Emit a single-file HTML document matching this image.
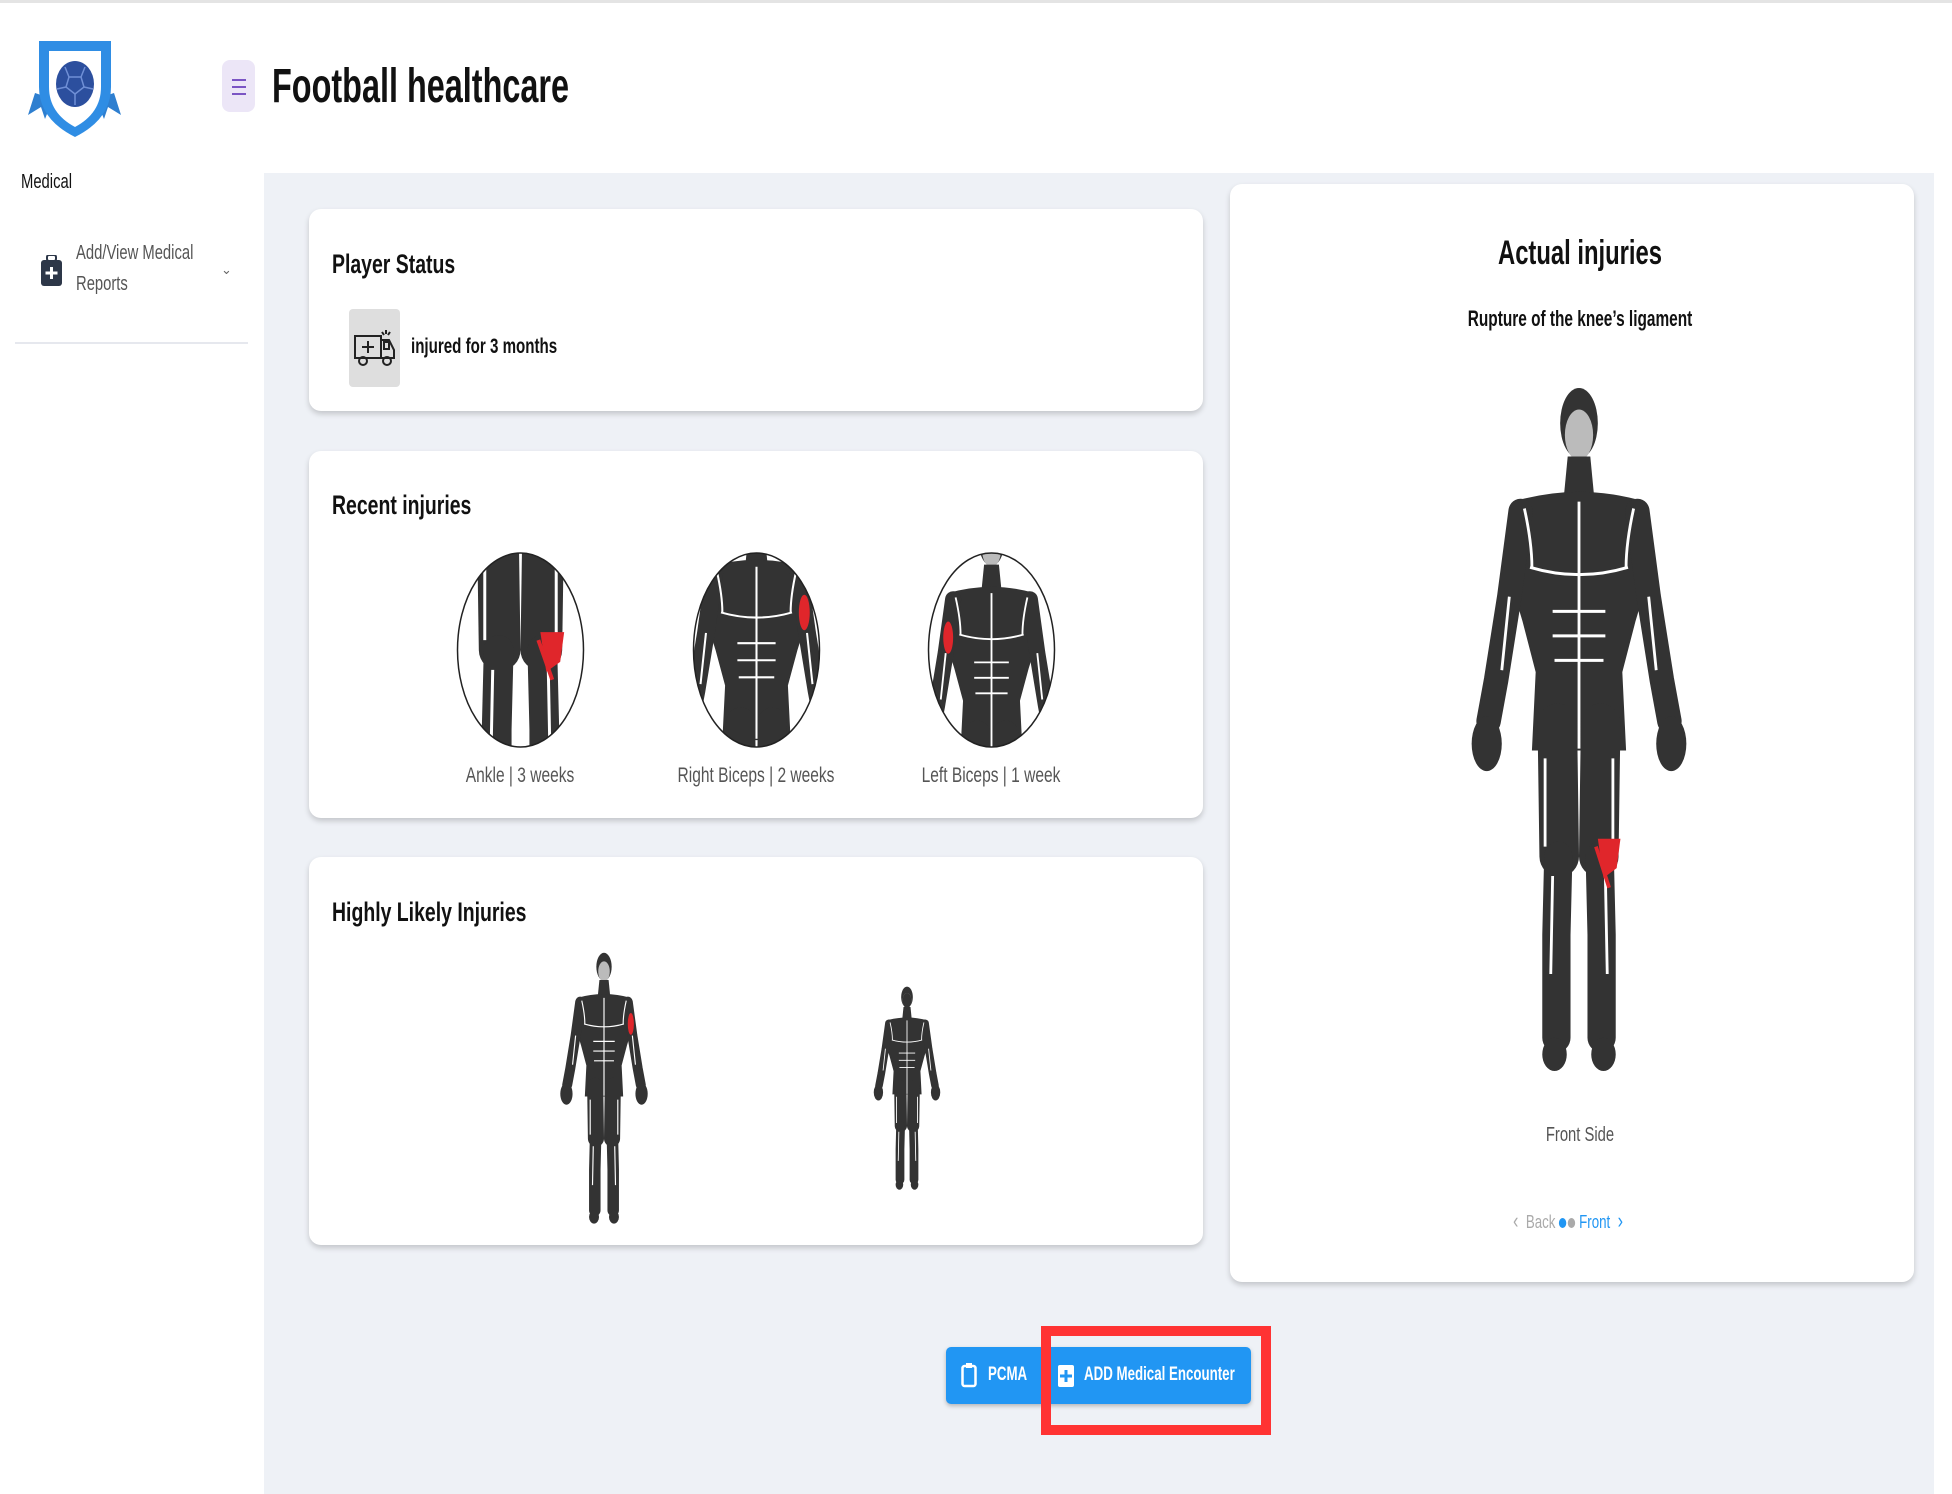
<!DOCTYPE html>
<html><head><meta charset="utf-8">
<style>
*{margin:0;padding:0;box-sizing:border-box}
body{width:1952px;height:1494px;overflow:hidden;background:#fff;font-family:"Liberation Sans",sans-serif;position:relative;color:#111}
.a{position:absolute}
.c{transform-origin:left center;transform:scaleX(.74);white-space:nowrap}
.card{position:absolute;background:#fff;border-radius:12px;box-shadow:0 3px 6px rgba(0,0,0,.18)}
.h{position:absolute;font-weight:bold;font-size:27px;color:#111;transform-origin:left center;transform:scaleX(.72);white-space:nowrap}
.lab{position:absolute;font-size:21px;color:#555;text-align:center;width:300px;transform:scaleX(.74)}
</style></head><body>
<svg width="0" height="0" style="position:absolute">
<defs>
<g id="body">
<ellipse cx="140" cy="38" rx="20" ry="36" fill="#333"/>
<ellipse cx="140" cy="50" rx="15" ry="26" fill="#bbb"/>
<path d="M128 72 L152 72 L156 112 L124 112 Z" fill="#333"/>
<path d="M70 118 Q140 98 210 118 L218 182 L200 240 L186 292 L190 372 L90 372 L94 292 L80 240 L62 182 Z" fill="#333"/>
<g stroke="#333" stroke-linecap="round" fill="none">
<polyline points="78,128 66,215 52,300 44,342" stroke-width="26"/>
<polyline points="202,128 214,215 228,300 236,342" stroke-width="26"/>
<polyline points="117,345 119,480" stroke-width="42"/>
<polyline points="163,345 161,480" stroke-width="42"/>
<polyline points="118,480 116,560 116,665" stroke-width="30"/>
<polyline points="162,480 164,560 164,665" stroke-width="30"/>
</g>
<ellipse cx="42" cy="365" rx="16" ry="28" fill="#333"/>
<ellipse cx="238" cy="365" rx="16" ry="28" fill="#333"/>
<ellipse cx="114" cy="682" rx="13" ry="17" fill="#333"/>
<ellipse cx="166" cy="682" rx="13" ry="17" fill="#333"/>
<g stroke="#fff" stroke-width="3" fill="none">
<line x1="140" y1="118" x2="140" y2="370"/>
<path d="M88 185 Q140 200 192 185"/>
<path d="M112 230 L168 230 M112 255 L168 255 M114 280 L166 280"/>
<path d="M82 125 Q90 160 90 185 M198 125 Q190 160 190 185"/>
<path d="M104 380 L104 470 M176 380 L176 470 M112 500 L110 600 M168 500 L170 600"/>
<path d="M66 215 L58 290 M214 215 L222 290"/>
</g>
</g>
</defs>
</svg>

<div class="a" style="left:0;top:0;width:1952px;height:3px;background:#e4e4e4"></div>

<svg class="a" style="left:27px;top:37px" width="95" height="104" viewBox="0 0 95 104">
<path d="M8 56 L1 78 L14 70 L18 82 L26 62 Z" fill="#2e7fd0"/>
<path d="M87 56 L94 78 L81 70 L77 82 L69 62 Z" fill="#2e7fd0"/>
<path d="M12 4 L84 4 L84 50 Q84 82 48 100 Q12 82 12 50 Z" fill="#2f8de4"/>
<path d="M22 14 L74 14 L74 50 Q74 76 48 90 Q22 76 22 50 Z" fill="#fff"/>
<ellipse cx="48" cy="47" rx="19" ry="23" fill="#2c4f9e"/>
<g fill="none" stroke="#6f8fd6" stroke-width="1.5"><path d="M42 40 L54 40 L57 50 L48 57 L39 50 Z"/><path d="M42 40 L38 30 M54 40 L58 30 M57 50 L66 52 M39 50 L30 52 M48 57 L48 68"/></g>
</svg>

<div class="a" style="left:222px;top:60px;width:33px;height:52px;background:#ece6f7;border-radius:8px"></div>
<div class="a" style="left:232px;top:79px;width:14px;height:2px;background:#7b55c4;box-shadow:0 7px 0 #7b55c4,0 14px 0 #7b55c4"></div>
<div class="a c" style="left:272px;top:59px;font-size:48px;font-weight:bold;color:#111;transform:scaleX(.675)">Football healthcare</div>

<div class="a c" style="left:21px;top:171px;font-size:20px">Medical</div>
<svg class="a" style="left:41px;top:255px" width="21" height="31" viewBox="0 0 21 31"><rect x="6" y="0" width="9" height="6" rx="2" fill="none" stroke="#2d3748" stroke-width="2"/><rect x="0" y="5" width="21" height="26" rx="3" fill="#2d3748"/><path d="M10.5 12v12M4.5 18h12" stroke="#fff" stroke-width="3"/></svg>
<div class="a c" style="left:76px;top:238px;font-size:20px;color:#555;line-height:31px">Add/View Medical<br>Reports</div>
<div class="a" style="left:221px;top:262px;font-size:13px;color:#666">&#8964;</div>
<div class="a" style="left:15px;top:342px;width:233px;height:2px;background:#e6e8ee"></div>

<div class="a" style="left:264px;top:173px;width:1670px;height:1321px;background:#eef1f6"></div>

<div class="card" style="left:309px;top:209px;width:894px;height:202px"></div>
<div class="h" style="left:332px;top:249px">Player Status</div>
<div class="a" style="left:349px;top:309px;width:51px;height:78px;background:#dedede;border-radius:4px"></div>
<svg class="a" style="left:353px;top:328px" width="44" height="42" viewBox="0 0 44 42"><g fill="none" stroke="#222" stroke-width="2"><rect x="2" y="8" width="26" height="22"/><path d="M28 12 H36 L41 22 V30 H28"/><rect x="31" y="14" width="5" height="7"/><circle cx="10" cy="33" r="4"/><circle cx="34" cy="33" r="4"/><path d="M15 13v12M9 19h12"/><path d="M33 2v4M29 4l2 3M37 4l-2 3"/></g></svg>
<div class="a c" style="left:411px;top:335px;font-size:21px;font-weight:bold;transform:scaleX(.72)">injured for 3 months</div>

<div class="card" style="left:309px;top:451px;width:894px;height:367px"></div>
<div class="h" style="left:332px;top:490px">Recent injuries</div>
<svg class="a" style="left:456px;top:551px" width="129" height="198" viewBox="0 0 129 198">
<defs><clipPath id="e1"><ellipse cx="64.5" cy="99" rx="63" ry="97"/></clipPath></defs>
<g clip-path="url(#e1)"><svg x="0" y="0" width="129" height="198" viewBox="75 380 130 200" preserveAspectRatio="xMidYMid slice"><use href="#body"/><path d="M160 462 L184 462 L180 492 L166 502 Z" fill="#e0262b"/><path d="M158 470 L172 510" stroke="#e0262b" stroke-width="4"/></svg></g>
<ellipse cx="64.5" cy="99" rx="63" ry="97" fill="none" stroke="#222" stroke-width="1.5"/></svg>
<svg class="a" style="left:692px;top:551px" width="129" height="198" viewBox="0 0 129 198">
<defs><clipPath id="e2"><ellipse cx="64.5" cy="99" rx="63" ry="97"/></clipPath></defs>
<g clip-path="url(#e2)"><svg x="0" y="0" width="129" height="198" viewBox="45 95 190 290" preserveAspectRatio="xMidYMid slice"><use href="#body"/><ellipse cx="210" cy="185" rx="8" ry="26" fill="#e0262b"/></svg></g>
<ellipse cx="64.5" cy="99" rx="63" ry="97" fill="none" stroke="#222" stroke-width="1.5"/></svg>
<svg class="a" style="left:927px;top:551px" width="129" height="198" viewBox="0 0 129 198">
<defs><clipPath id="e3"><ellipse cx="64.5" cy="99" rx="63" ry="97"/></clipPath></defs>
<g clip-path="url(#e3)"><svg x="0" y="0" width="129" height="198" viewBox="35 50 210 320" preserveAspectRatio="xMidYMid slice"><use href="#body"/><ellipse cx="70" cy="190" rx="8" ry="26" fill="#e0262b"/></svg></g>
<ellipse cx="64.5" cy="99" rx="63" ry="97" fill="none" stroke="#222" stroke-width="1.5"/></svg>
<div class="lab" style="left:370px;top:764px">Ankle | 3 weeks</div>
<div class="lab" style="left:606px;top:764px">Right Biceps | 2 weeks</div>
<div class="lab" style="left:841px;top:764px">Left Biceps | 1 week</div>

<div class="card" style="left:309px;top:857px;width:894px;height:388px"></div>
<div class="h" style="left:332px;top:897px">Highly Likely Injuries</div>
<svg class="a" style="left:558px;top:952px" width="92" height="272" viewBox="20 0 240 700" preserveAspectRatio="none"><use href="#body"/><ellipse cx="210" cy="185" rx="8" ry="28" fill="#e0262b"/></svg>
<svg class="a" style="left:872px;top:986px" width="70" height="204" viewBox="20 0 240 700" preserveAspectRatio="none"><use href="#body"/><ellipse cx="140" cy="50" rx="15" ry="26" fill="#333"/></svg>

<div class="card" style="left:1230px;top:184px;width:684px;height:1098px"></div>
<div class="a" style="left:1330px;top:234px;width:500px;text-align:center;font-size:34px;font-weight:bold;transform:scaleX(.7)">Actual injuries</div>
<div class="a" style="left:1330px;top:306px;width:500px;text-align:center;font-size:22px;font-weight:bold;transform:scaleX(.7)">Rupture of the knee’s ligament</div>
<svg class="a" style="left:1466px;top:386px" width="226" height="686" viewBox="20 0 240 700" preserveAspectRatio="none"><use href="#body"/><path d="M160 462 L184 462 L180 492 L166 502 Z" fill="#e0262b"/><path d="M158 470 L172 512" stroke="#e0262b" stroke-width="4"/></svg>
<div class="a" style="left:1430px;top:1124px;width:300px;text-align:center;font-size:20px;color:#555;transform:scaleX(.74)">Front Side</div>
<div class="a" style="left:1513px;top:1208px;font-size:18px;white-space:nowrap;transform:scaleX(.74);transform-origin:left center"><span style="color:#aaa;font-size:22px">‹</span> <span style="color:#aaa">&nbsp;Back</span> <span style="display:inline-block;width:10px;height:10px;border-radius:50%;background:#2196f3"></span><span style="display:inline-block;width:10px;height:10px;border-radius:50%;background:#aaa;margin-left:2px"></span> <span style="color:#2196f3">Front &nbsp;<span style="font-size:22px">›</span></span></div>

<div class="a" style="left:946px;top:1347px;width:305px;height:57px;background:#2196f3;border-radius:5px;box-shadow:0 2px 4px rgba(0,0,0,.25)"></div>
<svg class="a" style="left:961px;top:1362px" width="16" height="26" viewBox="0 0 16 26"><rect x="1.5" y="4" width="13" height="20" rx="2" fill="none" stroke="#fff" stroke-width="2.5"/><rect x="5" y="1" width="6" height="5" fill="#fff"/></svg>
<div class="a c" style="left:988px;top:1364px;font-size:19px;font-weight:bold;color:#fff;transform:scaleX(.7)">PCMA</div>
<svg class="a" style="left:1058px;top:1365px" width="16" height="22" viewBox="0 0 16 22"><rect x="0" y="0" width="16" height="22" rx="2" fill="#fff"/><path d="M8 5v12M2 11h12" stroke="#2196f3" stroke-width="3"/></svg>
<div class="a c" style="left:1084px;top:1364px;font-size:19px;font-weight:bold;color:#fff;transform:scaleX(.7)">ADD Medical Encounter</div>
<div class="a" style="left:1041px;top:1326px;width:230px;height:109px;border:10px solid #ff3333"></div>
</body></html>
